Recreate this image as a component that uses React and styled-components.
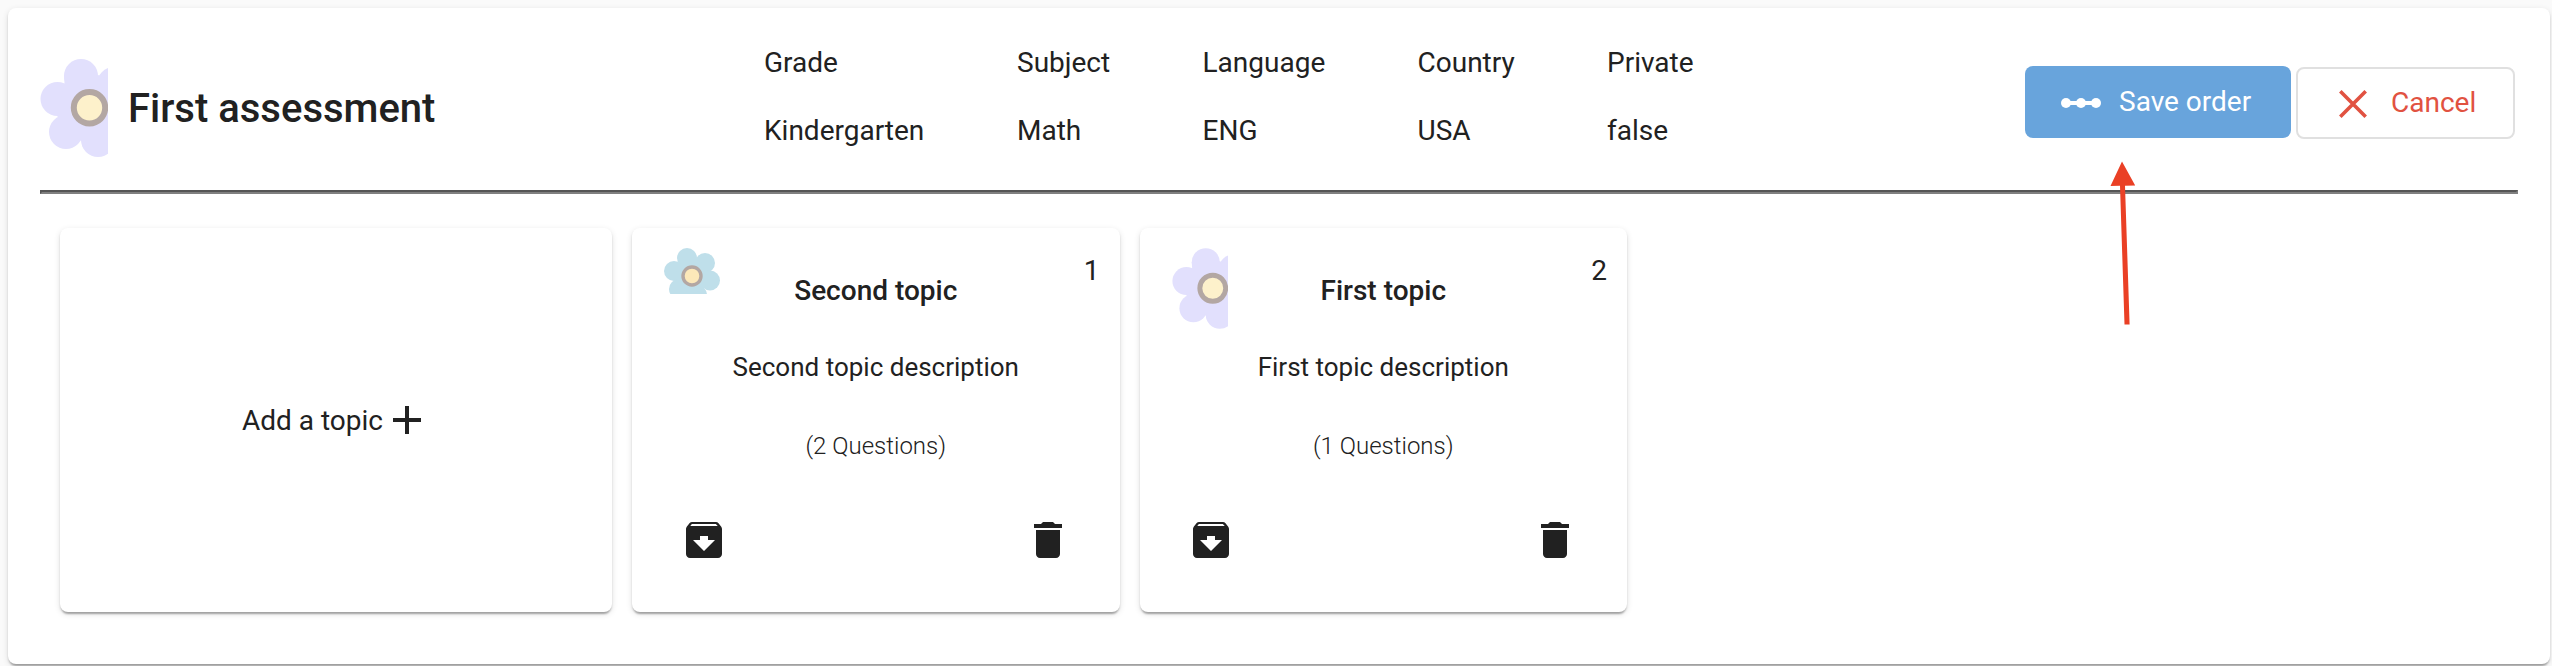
import React from "react";
import styled, { createGlobalStyle } from "styled-components";

const GlobalStyle = createGlobalStyle`
  * { box-sizing: border-box; }
  body { margin: 0; background: #fafafa; color: #212121; font: 400 28px/41px Roboto, sans-serif; overflow: hidden; }
`;
const shadow = "0 4px 2px -2px rgba(0,0,0,.2), 0 2px 2px rgba(0,0,0,.14), 0 2px 6px rgba(0,0,0,.12)";

const Page = styled.div`
  height: 666px;
  padding: 8px 2px 2px 8px;
`;
const Panel = styled.main`
  position: relative;
  height: 656px;
  padding: 0 32px;
  background: #fff;
  border-radius: 8px;
  box-shadow: ${shadow};
`;
const Header = styled.header`
  display: flex;
  align-items: flex-start;
  height: 182px;
`;
const Brand = styled.div`
  display: flex;
  align-items: flex-start;
  width: 724px;
  padding-top: 51px;
`;
const Title = styled.h1`
  margin: 23px 0 0 20px;
  font-size: 40px;
  line-height: 53px;
  font-weight: 500;
  white-space: nowrap;
`;
const Facts = styled.dl`
  display: flex;
  margin: 0;
  padding-top: 34px;
`;
const Fact = styled.div`
  width: ${(p) => p.$width}px;
  white-space: nowrap;
`;
const Term = styled.dt`
  margin-bottom: 27px;
`;
const Value = styled.dd`
  margin: 0;
`;
const Actions = styled.div`
  display: flex;
  gap: 5px;
  margin-left: auto;
  padding: 58px 3px 0 0;
`;
const Button = styled.button`
  display: flex;
  align-items: center;
  height: 72px;
  width: ${(p) => p.$width}px;
  padding: 0 0 1px ${(p) => p.$inset}px;
  gap: ${(p) => p.$gap}px;
  border: 0;
  border-radius: 8px;
  font: 400 28px/41px Roboto, sans-serif;
  color: #fff;
  background: #68a4dc;
  white-space: nowrap;

  svg { margin-top: 3px; }
`;
const OutlineButton = styled(Button)`
  margin-top: 1px;
  color: #e15241;
  background: #fff;
  border: 2px solid #e0e0e0;
`;
const Divider = styled.hr`
  height: 4px;
  margin: 0;
  border: 2px solid;
  border-color: #555 #808080 #808080 #555;
`;
const Board = styled.section`
  display: flex;
  gap: 20px;
  padding: 34px 20px 0;
`;
const Card = styled.article`
  display: flex;
  flex-direction: column;
  width: 487.5px;
  height: 384px;
  padding: 20px;
  background: #fff;
  border-radius: 8px;
  box-shadow: ${shadow};
`;
const AddCard = styled(Card)`
  flex-direction: row;
  align-items: center;
  justify-content: center;
  gap: 10px;
  width: 552px;
  padding: 20px 29px 19px 20px;

  svg { margin-bottom: 1px; }
`;
const CardTop = styled.div`
  display: grid;
  grid-template-columns: 80px 1fr 80px;
  height: 84px;
`;
const Badge = styled.div`
  padding-left: 12px;
`;
const CardTitle = styled.h2`
  margin: 22px 0 0;
  font-size: 28px;
  line-height: 41px;
  font-weight: 500;
  text-align: center;
`;
const Order = styled.span`
  padding-top: 2px;
  text-align: right;
`;
const Description = styled.p`
  margin: 15px 0 0;
  font-size: 26px;
  line-height: 40px;
  text-align: center;
`;
const Count = styled.p`
  margin: 39px 0 0;
  font-size: 24px;
  line-height: 40px;
  font-weight: 300;
  text-align: center;
`;
const CardActions = styled.div`
  display: flex;
  justify-content: space-between;
  margin-top: 50px;
  padding: 0 28px 0 27.5px;
`;
const Pointer = styled.svg`
  position: absolute;
  left: 2100px;
  top: 152px;
`;

const Violet = ({ width, height }) => (
  <svg width={width} height={height} viewBox="0 0 68 98" display="block">
    <g fill="#e2e0fd">
      <circle cx="41" cy="17" r="17" />
      <circle cx="17.5" cy="40" r="17" />
      <circle cx="26" cy="73" r="17" />
      <circle cx="58" cy="81" r="17" />
      <circle cx="74" cy="25" r="17" />
      <path d="M24 17 24.5 24 17 57 41 82 60 90 68 90V20L58 16Z" />
    </g>
    <circle cx="49.5" cy="48.7" r="15.7" fill="#fdf1cb" stroke="#b3a7a3" strokeWidth="6" />
  </svg>
);
const Blue = () => (
  <svg width="56" height="46" viewBox="0 0 56 46" display="block">
    <g fill="#bfdfea">
      <circle cx="23" cy="10" r="10" />
      <circle cx="41" cy="15" r="10" />
      <circle cx="46" cy="32.5" r="10" />
      <circle cx="10" cy="23" r="10" />
      <circle cx="15" cy="41" r="10" />
      <circle cx="33" cy="47" r="10" />
      <circle cx="28" cy="28" r="16.5" />
    </g>
    <circle cx="28" cy="28" r="9" fill="#fce8b9" stroke="#b3a7a3" strokeWidth="3.4" />
  </svg>
);
const OrderIcon = () => (
  <svg width="40" height="12" viewBox="0 0 40 12" fill="#fff">
    <circle cx="5" cy="6" r="5" /><circle cx="20" cy="6" r="5" /><circle cx="35" cy="6" r="5" />
    <path d="M5 4h30v4H5z" />
  </svg>
);
const CrossIcon = () => (
  <svg width="28" height="28" viewBox="0 0 28 28" stroke="#e15241" strokeWidth="3.6">
    <path d="M1.300 1.300 26.700 26.700M26.700 1.300 1.300 26.700" />
  </svg>
);
const PlusIcon = () => (
  <svg width="28" height="28" viewBox="0 0 28 28" stroke="#212121" strokeWidth="4">
    <path d="M0 14H28M14 0V28" />
  </svg>
);
const ArchiveIcon = () => (
  <svg width="48" height="48" viewBox="0 0 24 24" fill="#212121">
    <path d="M20.54 5.23l-1.39-1.68C18.88 3.21 18.47 3 18 3H6c-.47 0-.88.21-1.16.55L3.46 5.23C3.17 5.57 3 6.02 3 6.5V19c0 1.1.9 2 2 2h14c1.1 0 2-.9 2-2V6.5c0-.48-.17-.93-.46-1.27zM12 17.5L6.5 12H10v-2h4v2h3.500L12 17.500zM5.120 5l.81-1h12l.94 1H5.120z" />
  </svg>
);
const TrashIcon = () => (
  <svg width="48" height="48" viewBox="0 0 24 24" fill="#212121">
    <path d="M6 19c0 1.100.9 2 2 2h8c1.100 0 2-.9 2-2V7H6v12zM19 4h-3.500l-1-1h-5l-1 1H5v2h14V4z" />
  </svg>
);

const facts = [
  ["Grade", "Kindergarten", 253],
  ["Subject", "Math", 185.5],
  ["Language", "ENG", 215],
  ["Country", "USA", 189.5],
  ["Private", "false", 120],
];
const topics = [
  { title: "Second topic", questions: 2, icon: <Blue /> },
  { title: "First topic", questions: 1, icon: <Violet width={56} height={81} /> },
];

export default function App() {
  return (
    <Page>
      <GlobalStyle />
      <Panel>
        <Header>
          <Brand>
            <Violet width={68} height={98} />
            <Title>First assessment</Title>
          </Brand>
          <Facts>
            {facts.map(([term, value, width]) => (
              <Fact key={term} $width={width}>
                <Term>{term}</Term>
                <Value>{value}</Value>
              </Fact>
            ))}
          </Facts>
          <Actions>
            <Button $width={266} $inset={35.5} $gap={18.5}><OrderIcon />Save order</Button>
            <OutlineButton $width={219} $inset={40.5} $gap={24.5}><CrossIcon />Cancel</OutlineButton>
          </Actions>
        </Header>
        <Divider />
        <Board>
          <AddCard>Add a topic<PlusIcon /></AddCard>
          {topics.map((topic, index) => (
            <Card key={topic.title}>
              <CardTop>
                <Badge>{topic.icon}</Badge>
                <CardTitle>{topic.title}</CardTitle>
                <Order>{index + 1}</Order>
              </CardTop>
              <Description>{topic.title} description</Description>
              <Count>({topic.questions} Questions)</Count>
              <CardActions><ArchiveIcon /><TrashIcon /></CardActions>
            </Card>
          ))}
        </Board>
        <Pointer width="36" height="166" viewBox="0 0 36 166" fill="#ea4025">
          <path d="M14 1.500 27.200 25.500 17 25.700 21.600 164.500 16.500 164.500 12 25.800 2.500 26Z" />
        </Pointer>
      </Panel>
    </Page>
  );
}
